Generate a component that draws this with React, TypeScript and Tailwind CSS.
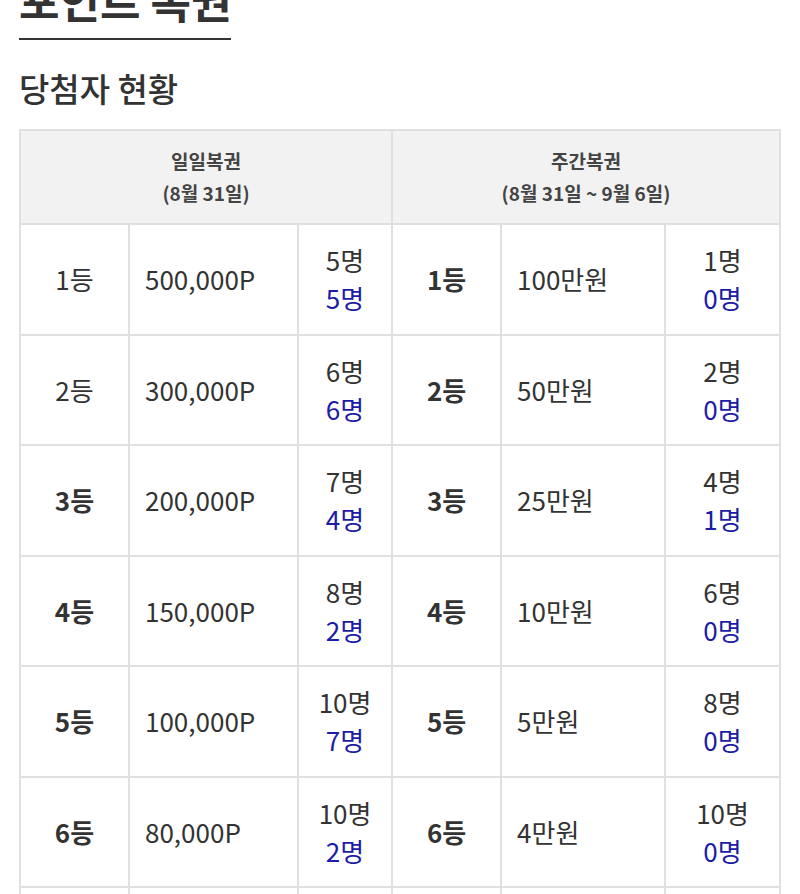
import React from 'react';

const daily = [
  { rank: '1등', prize: '500,000P', total: '5명', won: '5명', bold: false },
  { rank: '2등', prize: '300,000P', total: '6명', won: '6명', bold: false },
  { rank: '3등', prize: '200,000P', total: '7명', won: '4명', bold: true },
  { rank: '4등', prize: '150,000P', total: '8명', won: '2명', bold: true },
  { rank: '5등', prize: '100,000P', total: '10명', won: '7명', bold: true },
  { rank: '6등', prize: '80,000P', total: '10명', won: '2명', bold: true },
  { rank: '7등', prize: '50,000P', total: '10명', won: '3명', bold: true },
];

const weekly = [
  { rank: '1등', prize: '100만원', total: '1명', won: '0명' },
  { rank: '2등', prize: '50만원', total: '2명', won: '0명' },
  { rank: '3등', prize: '25만원', total: '4명', won: '1명' },
  { rank: '4등', prize: '10만원', total: '6명', won: '0명' },
  { rank: '5등', prize: '5만원', total: '8명', won: '0명' },
  { rank: '6등', prize: '4만원', total: '10명', won: '0명' },
  { rank: '7등', prize: '3만원', total: '10명', won: '0명' },
];

export default function App() {
  return (
    <div className="bg-white text-[#333] px-[19px] overflow-hidden h-[894px]" style={{ fontFamily: '"Noto Sans CJK KR", "Noto Sans", sans-serif' }}>
      <div className="-mt-[30px]">
        <h1 className="inline-block text-[44px] font-bold leading-[60px] pb-[8px] border-b-2 border-[#333]">포인트 복권</h1>
      </div>
      <h2 className="mt-[25px] text-[33px] font-medium leading-[46px]">당첨자 현황</h2>
      <table className="mt-[18px] w-full table-fixed border-collapse border-2 border-[#e0e0e0]">
        <colgroup>
          <col className="w-[109px]" />
          <col className="w-[169px]" />
          <col className="w-[94px]" />
          <col className="w-[109px]" />
          <col className="w-[164px]" />
          <col />
        </colgroup>
        <thead>
          <tr className="h-[94px] bg-[#f2f2f2]">
            <th colSpan={3} className="border-2 border-[#e0e0e0] text-[19px] font-bold leading-[32px] text-[#444]">
              일일복권<br />(8월 31일)
            </th>
            <th colSpan={3} className="border-2 border-[#e0e0e0] text-[19px] font-bold leading-[32px] text-[#444]">
              주간복권<br />(8월 31일 ~ 9월 6일)
            </th>
          </tr>
        </thead>
        <tbody>
          {daily.map((d, i) => {
            const w = weekly[i];
            return (
              <tr key={d.rank} className="h-[110.5px] text-[26px] leading-[38px]">
                <td className={`border-2 border-[#e0e0e0] text-center ${d.bold ? 'font-bold' : 'font-normal'}`}>{d.rank}</td>
                <td className="border-2 border-[#e0e0e0] pl-[15px]">{d.prize}</td>
                <td className="border-2 border-[#e0e0e0] text-center">
                  <div>{d.total}</div>
                  <div className="text-[#1c1ca6]">{d.won}</div>
                </td>
                <td className="border-2 border-[#e0e0e0] text-center font-bold">{w.rank}</td>
                <td className="border-2 border-[#e0e0e0] pl-[15px]">{w.prize}</td>
                <td className="border-2 border-[#e0e0e0] text-center">
                  <div>{w.total}</div>
                  <div className="text-[#1c1ca6]">{w.won}</div>
                </td>
              </tr>
            );
          })}
        </tbody>
      </table>
    </div>
  );
}
